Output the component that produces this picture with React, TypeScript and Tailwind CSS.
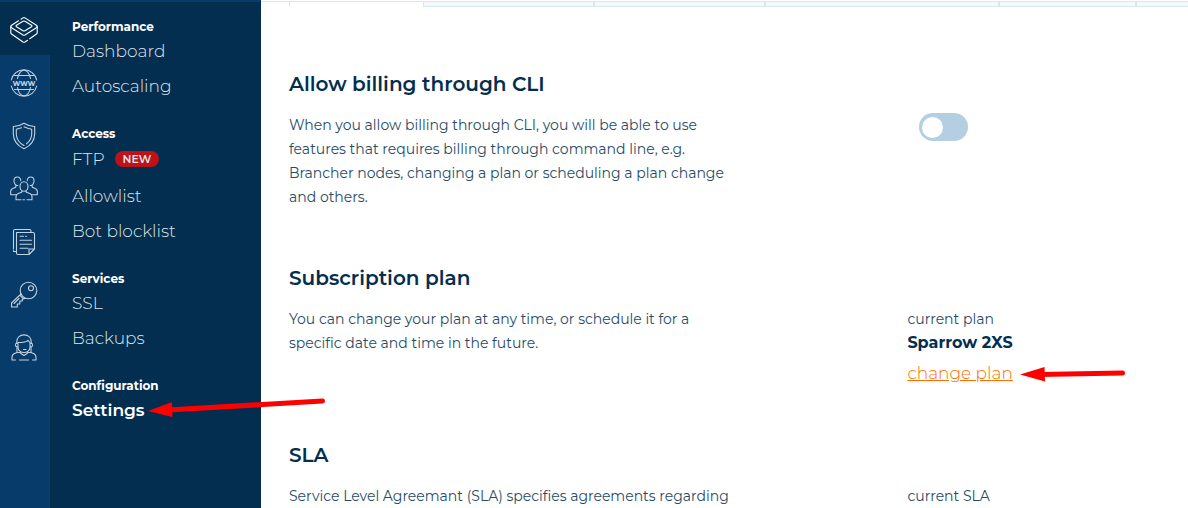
import type { ReactNode } from "react";

type MenuItem = { label: string; badge?: string; active?: boolean };
type MenuGroup = { title: string; items: MenuItem[] };

const groups: MenuGroup[] = [
  { title: "Performance", items: [{ label: "Dashboard" }, { label: "Autoscaling" }] },
  {
    title: "Access",
    items: [{ label: "FTP", badge: "NEW" }, { label: "Allowlist" }, { label: "Bot blocklist" }],
  },
  { title: "Services", items: [{ label: "SSL" }, { label: "Backups" }] },
  { title: "Configuration", items: [{ label: "Settings", active: true }] },
];

const railIcons: { name: string; art: ReactNode }[] = [
  {
    name: "Applications",
    art: (
      <>
        <path d="M11 3.2 13 1.9q1-.6 2 0l11.4 7.3q1.6 1.3 0 2.6L15 19q-1 .6-2 0L1.600 11.800q-1.600-1.300 0-2.600L8.500 4.800" />
        <path d="M14 5q.6 0 1 .3l6.500 4q1 .7 0 1.400l-6.500 4q-1 .6-2 0l-6.500-4q-1-.7 0-1.400l6.500-4q.4-.3 1-.3Z" />
        <path d="M.8 10.500v6.200q0 .8.700 1.300L13 26q1 .6 2 0l2.500-1.700M27.200 10.500v6.200q0 .8-.7 1.300l-6.800 4.700" />
      </>
    ),
  },
  {
    name: "Domains",
    art: (
      <>
        <path d="M1.300 11A13 13 0 0 1 26.700 11M1.300 17A13 13 0 0 0 26.700 17M4.500 6.500h19M4.500 20.500h19" />
        <path d="M7.500 9.500C8.500 5 11 1.200 14 1.200S19.500 5 20.500 9.500M7.500 18.500c1 5 3.500 8.300 6.500 8.300s5.500-3.300 6.500-8.300" />
        <text
          x="14"
          y="16.500"
          textAnchor="middle"
          stroke="none"
          fill="currentColor"
          className="font-['Montserrat','Inter',sans-serif] text-[8px] font-bold"
        >
          www
        </text>
      </>
    ),
  },
  {
    name: "Security",
    art: (
      <>
        <path d="M14 1.200C10.500 3.500 7 4.300 3.300 4.500v7.500C3.500 19 8 24 14 26.800 20 24 24.500 19 24.700 12V4.500C21 4.300 17.500 3.500 14 1.200Z" />
        <path d="M11.500 5.800Q9 6.800 6.300 7.200v5.300c.4 4.800 3.200 8.700 7.700 11M14 4.800q3.500 1.900 7.700 2.400v5.300c-.3 3.800-2.200 7-5.200 9.300" />
      </>
    ),
  },
  {
    name: "Users",
    art: (
      <>
        <ellipse cx="14" cy="11.500" rx="4" ry="4.800" />
        <path d="M11.700 16v1.300L8.200 18.500Q6 19.300 6 21.500v3.300h5M16.300 16v1.300l3.500 1.200q2.200.8 2.200 3v3.300h-5M13 24.800h1.500" />
        <path d="M10.800 5.800C10.500 3.200 9.200 2 7.300 2 5 2 4 3.800 4 5.800c0 2.500 1.500 4.700 3.800 4.700M5.800 10v2.200L2.700 13.500Q.7 14.300.7 16.500v3.300h5" />
        <path d="M17.200 5.800C17.500 3.200 18.800 2 20.700 2 23 2 24 3.800 24 5.800c0 2.500-1.500 4.700-3.800 4.700M22.200 10v2.200l3.100 1.300q2 .8 2 3v3.300h-5" />
      </>
    ),
  },
  {
    name: "Documents",
    art: (
      <>
        <path d="M6.500 4.500H23q1.500 0 1.500 1.500v15L19 26.500H8q-1.500 0-1.500-1.500ZM24.500 21H19v5.500" />
        <path d="M21 4.500V3q0-1.500-1.500-1.500H5Q3.500 1.500 3.500 3v18M3.500 22.500v1h3M10 8.200h3.500M15.500 8.200h1M10 12.300h11.500M10 16.300h11.500M10 20.300h8" />
      </>
    ),
  },
  {
    name: "SSH keys",
    art: (
      <>
        <circle cx="18.500" cy="9.500" r="8.300" />
        <circle cx="21" cy="7.200" r="2.500" />
        <path d="M11 13 1.500 22v4h5.800v-3h2.500v-3h2.500v-1.800l3-1M9.800 14.200l3.600 3.600M4 22.500l5-5" />
      </>
    ),
  },
  {
    name: "Support",
    art: (
      <>
        <path d="M6.700 9.500V8.300C6.700 3.700 9.700.9 14 .9s7.300 2.800 7.300 7.400v1.200" />
        <path d="M8 8.500c5.500 0 8.500-.6 10-2.200l2 2.200v4.700c0 3.300-3 5.300-6 5.300s-6-2-6-5.300ZM8 9.300H6.700q-1.200 0-1.200 1.700t1.200 1.700H8M20 9.300h1.300q1.200 0 1.200 1.700t-1.200 1.700H20M16 15.500h-2.500" />
        <path d="M7 13v5.500h3.500v.8M21 13v5.500h-3.500v.8M7 18.500l-3 1.200Q2 20.700 2 23v3h3.500M21 18.500l3 1.200q2 1 2 3.300v3h-3.500M9.500 26h9M11 19.500l3 2 3-2" />
      </>
    ),
  },
];

const tabs = [
  "w-[134px] border-l border-[#dbe7f2]",
  "w-[170px] border-l border-b border-[#d8e6f1] bg-[#f5f9fe]",
  "w-[171px] border-l-2 border-b border-[#d8e6f1] bg-[#f5f9fe]",
  "w-[234px] border-l-2 border-b border-[#d8e6f1] bg-[#f5f9fe]",
  "w-[137px] border-l-2 border-b border-[#d8e6f1] bg-[#f5f9fe]",
  "flex-1 border-l-2 border-b border-[#d8e6f1] bg-[#f5f9fe]",
];

function Arrow({ className, points, shaft, viewBox }: { className: string; points: string; shaft: string; viewBox: string }) {
  return (
    <svg className={className} viewBox={viewBox} fill="#ff0000" aria-hidden="true">
      <path d={shaft} stroke="#ff0000" strokeWidth="5" strokeLinecap="round" />
      <polygon points={points} />
    </svg>
  );
}

function Section({ title, text, children }: { title: string; text: ReactNode; children: ReactNode }) {
  return (
    <section>
      <h2 className="text-xl leading-7 font-semibold">{title}</h2>
      <div className="mt-[15px] grid grid-cols-[71%_29%]">
        <p className="text-sm leading-6 text-[#274b67]">{text}</p>
        <div>{children}</div>
      </div>
    </section>
  );
}

export default function App() {
  return (
    <div className="flex h-screen flex-col overflow-hidden bg-white font-['Montserrat','Inter',sans-serif] text-[#032e50]">
      <div className="flex min-h-0 flex-1">
        <nav aria-label="Main" className="w-[50px] shrink-0 border-t-2 border-[#073b69] bg-[#073b69]">
          {railIcons.map((icon, i) => (
            <a
              key={icon.name}
              href="#"
              aria-label={icon.name}
              className={
                i === 0
                  ? "flex h-[53px] items-center justify-center bg-[#032e50] pt-[3px] pr-[2px] text-white"
                  : "flex h-[53px] items-center justify-center pt-[3px] pr-[2px] text-[#c3d2df]"
              }
            >
              <svg viewBox="0 0 28 28" className="size-7" fill="none" stroke="currentColor" strokeWidth="1.1" strokeLinecap="round" strokeLinejoin="round">
                {icon.art}
              </svg>
            </a>
          ))}
        </nav>

        <nav aria-label="Application" className="flex w-[211px] shrink-0 flex-col gap-5 border-t-2 border-[#073b69] bg-[#032e50] pt-3 pl-[22px]">
          {groups.map((group) => (
            <div key={group.title}>
              <h3 className="pt-[2px] text-xs leading-[22px] font-bold text-white">{group.title}</h3>
              <ul className="-mt-[2px] flex flex-col gap-[5px]">
                {group.items.map((item) => (
                  <li key={item.label} className={item.badge ? "flex h-[33px] items-center pb-[2px]" : "flex h-[30px] items-center"}>
                    <a
                      href="#"
                      className={
                        item.active
                          ? "relative text-[17px] leading-[30px] font-semibold text-white"
                          : "flex items-center gap-[10px] text-[17px] leading-[30px] font-light text-[#dde3e8]"
                      }
                    >
                      {item.label}
                      {item.badge && (
                        <span className="rounded-full bg-[#be1118] px-2 text-[11px] leading-4 font-semibold text-[#dfe2e6]">{item.badge}</span>
                      )}
                      {item.active && (
                        <Arrow
                          className="absolute top-0 left-[76px] z-10 h-[24px] w-[180px]"
                          viewBox="0 0 180 24"
                          shaft="M20 15 174.500 6"
                          points="0,16 24,7 24.500,22"
                        />
                      )}
                    </a>
                  </li>
                ))}
              </ul>
            </div>
          ))}
        </nav>

        <main className="min-w-0 flex-1">
          <div className="pt-px">
            <div className="flex h-[6px] border-t border-[#dbe5ee] pl-[28px]">
              {tabs.map((style, i) => (
                <div key={i} className={style} />
              ))}
            </div>
          </div>
          <div className="flex flex-col gap-[55px] px-7 pt-[63px]">
            <Section
              title="Allow billing through CLI"
              text={
                <>
                  When you allow billing through CLI, you will be able to use
                  <br />
                  features that requires billing through command line, e.g.
                  <br />
                  Brancher nodes, changing a plan or scheduling a plan change
                  <br />
                  and others.
                </>
              }
            >
              <label className="ml-3 block h-7 w-[49px] cursor-pointer rounded-full bg-[#b5cfe2] p-[3px]">
                <input type="checkbox" aria-label="Allow billing through CLI" className="peer sr-only" />
                <span className="mt-px block size-[21px] rounded-full bg-white peer-checked:ml-auto" />
              </label>
            </Section>
            <Section
              title="Subscription plan"
              text={
                <>
                  You can change your plan at any time, or schedule it for a
                  <br />
                  specific date and time in the future.
                </>
              }
            >
              <p className="text-sm leading-6 text-[#274b67]">current plan</p>
              <p className="text-base leading-6 font-bold">Sparrow 2XS</p>
              <a href="#" className="relative mt-[6px] inline-block text-[17px] leading-6 font-light text-[#fd6f00] underline">
                change plan
                <Arrow
                  className="absolute top-[3px] left-[113px] h-[20px] w-[110px]"
                  viewBox="0 0 110 20"
                  shaft="M20 10.500 102.500 9"
                  points="0,10.500 24.500,3 25,17.500"
                />
              </a>
            </Section>
            <Section title="SLA" text="Service Level Agreemant (SLA) specifies agreements regarding">
              <p className="text-sm leading-6 text-[#274b67]">current SLA</p>
            </Section>
          </div>
        </main>
      </div>
    </div>
  );
}
